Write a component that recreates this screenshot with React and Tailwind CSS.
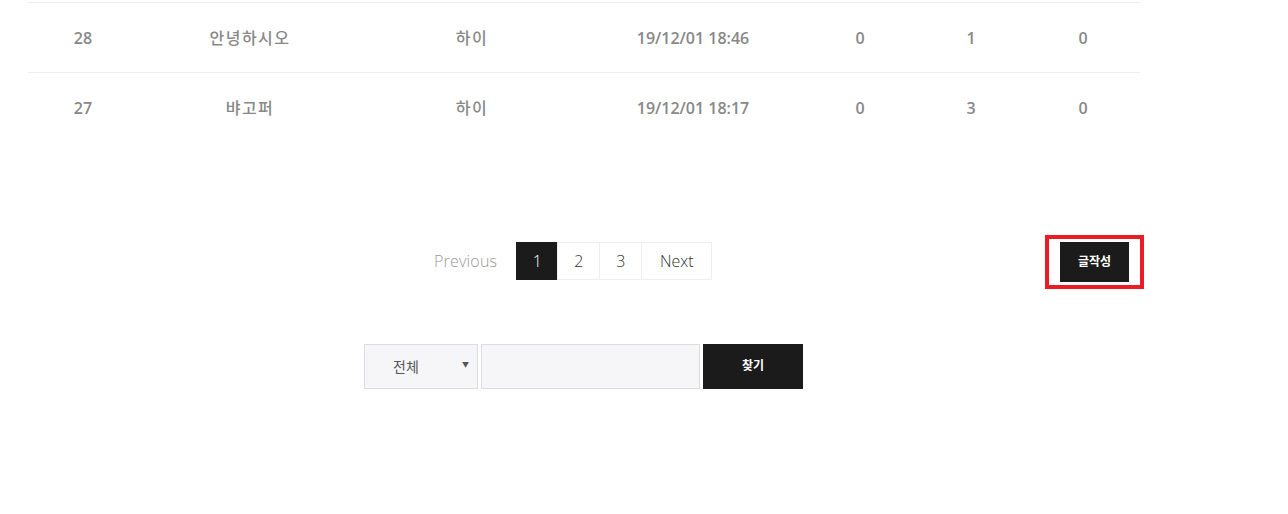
import { useState } from "react";

const rows = [
  { no: 28, name: "안녕하시오", title: "하이", date: "19/12/01 18:46", a: 0, b: 1, c: 0 },
  { no: 27, name: "뱌고퍼", title: "하이", date: "19/12/01 18:17", a: 0, b: 3, c: 0 },
];

const font = { fontFamily: '"Open Sans", "Noto Sans CJK KR", sans-serif' };

export default function App() {
  const [page, setPage] = useState(1);
  const [field, setField] = useState("all");
  const [query, setQuery] = useState("");

  return (
    <div className="min-h-[514px] bg-white" style={font}>
      <div className="ml-[28px] w-[1112px]">
        {/* board list */}
        <table className="w-full table-fixed border-collapse mt-[2px] text-[16px] font-semibold text-[#888]">
          <colgroup>
            <col className="w-[110px]" />
            <col className="w-[224px]" />
            <col className="w-[220px]" />
            <col className="w-[222px]" />
            <col className="w-[112px]" />
            <col className="w-[110px]" />
            <col className="w-[114px]" />
          </colgroup>
          <tbody>
            {rows.map((r, idx) => (
              <tr key={r.no} className={idx === 0 ? "border-t border-b border-[#eee] h-[70px]" : "h-[70px]"}>
                <td className="text-center">{r.no}</td>
                <td className="text-center font-medium tracking-[1.5px]">{r.name}</td>
                <td className="text-center font-medium tracking-[1.5px]">{r.title}</td>
                <td className="text-center">{r.date}</td>
                <td className="text-center">{r.a}</td>
                <td className="text-center">{r.b}</td>
                <td className="text-center">{r.c}</td>
              </tr>
            ))}
          </tbody>
        </table>

        {/* pagination + write */}
        <div className="flex items-center mt-[92px] h-[54px]">
          <div className="flex items-center ml-[406px] text-[16px] font-light -mt-[2px]">
            <span className="text-[#999] mr-[19px] tracking-[0.2px]">Previous</span>
            {[1, 2, 3].map((n) => (
              <button
                key={n}
                onClick={() => setPage(n)}
                className={
                  page === n
                    ? "h-[38px] w-[42px] bg-[#1b1b1b] text-white border border-[#1b1b1b]"
                    : "h-[38px] w-[43px] bg-white text-[#333] border border-[#eee] -ml-px"
                }
              >
                {n}
              </button>
            ))}
            <button className="h-[38px] w-[71px] bg-white text-[#333] border border-[#eee] -ml-px">Next</button>
          </div>
          <div className="ml-auto mr-[-4px] border-[4px] border-[#ec1c24] w-[99px] h-[54px] flex items-center justify-center">
            <button className="h-[40px] w-[69px] bg-[#1b1b1b] text-white text-[12px] font-bold">글작성</button>
          </div>
        </div>

        {/* search */}
        <div className="flex justify-center mt-[55px] gap-[3px] ml-[-1px]">
          <div className="relative w-[114px] h-[45px] border border-[#ddd] bg-[#f6f6f8]">
            <select
              value={field}
              onChange={(e) => setField(e.target.value)}
              className="appearance-none w-full h-full bg-transparent pl-[28px] text-[14px] text-[#555] outline-none"
            >
              <option value="all">전체</option>
              <option value="title">제목</option>
              <option value="writer">작성자</option>
            </select>
            <span className="absolute right-[8px] top-[15px] text-[7px] text-[#555] pointer-events-none">▼</span>
          </div>
          <input
            value={query}
            onChange={(e) => setQuery(e.target.value)}
            className="w-[219px] h-[45px] border border-[#ddd] bg-[#f6f6f8] outline-none px-2"
          />
          <button className="w-[100px] h-[45px] bg-[#1b1b1b] text-white text-[12px] font-bold">찾기</button>
        </div>
      </div>
    </div>
  );
}
